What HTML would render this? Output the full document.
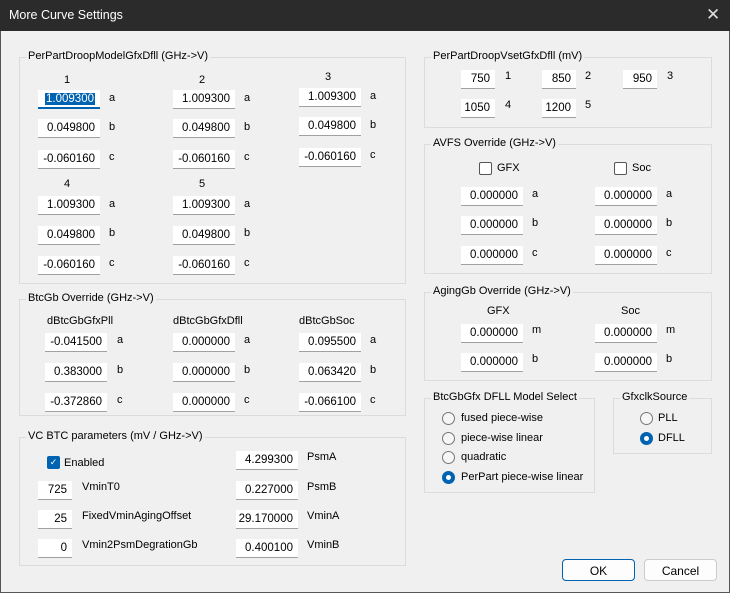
<!DOCTYPE html>
<html><head><style>
*{box-sizing:border-box;margin:0;padding:0}
body{width:730px;height:593px;background:#f0f0f0;font-family:"Liberation Sans",sans-serif;font-size:11px;color:#000;position:relative;overflow:hidden}
#tb{position:absolute;left:0;top:0;width:730px;height:31px;background:#2b2b2b;color:#fff;font-size:12.5px}
#tb .t{position:absolute;left:9px;top:8px}
#tb .x{position:absolute;left:706px;top:5px;font-size:17px;color:#ddd}
#frame{position:absolute;left:0;top:31px;width:730px;height:562px;border:1px solid #555;border-top:none}
.g{position:absolute;border:1px solid #dcdcdc}
.gt{position:absolute;background:#f0f0f0;padding:0 2px;white-space:nowrap;top:-8px;left:6px}
.i{position:absolute;background:#fff;border-bottom:1px solid #a0a0a0;height:19px;text-align:right;padding:3px 5px 0 0;font-size:11.5px}
.l{position:absolute;white-space:nowrap}
.sel{background:#0063b1;color:#fff;padding:0 1px}
.r{position:absolute;width:13px;height:13px;border:1px solid #777;border-radius:50%;background:#f6f6f6}
.r.on{background:#0063b1;border-color:#0063b1}
.r.on:after{content:"";position:absolute;left:3px;top:3px;width:5px;height:5px;border-radius:50%;background:#fff}
.cb{position:absolute;width:13px;height:13px;border:1px solid #555;background:#fff;border-radius:2px}
.btn{position:absolute;height:22px;width:73px;background:#fdfdfd;border:1px solid #ccc;border-radius:4px;text-align:center;padding-top:4px;font-size:12px}
</style></head><body>
<div id="tb"><span class="t">More Curve Settings</span><span class="x">✕</span></div>
<div id="frame"></div>

<div class="g" style="left:19px;top:57px;width:387px;height:227px"><span class="gt">PerPartDroopModelGfxDfll (GHz-&gt;V)</span></div>
<span class="l" style="left:64px;top:74px">1</span>
<span class="l" style="left:199px;top:74px">2</span>
<span class="l" style="left:325px;top:71px">3</span>
<div class="i" style="left:38px;top:90px;width:62px;border-bottom:2px solid #0063b1"><span class="sel">1.009300</span></div>
<div class="i" style="left:38px;top:119px;width:62px">0.049800</div>
<div class="i" style="left:38px;top:150px;width:62px">-0.060160</div>
<span class="l" style="left:109px;top:92px">a</span><span class="l" style="left:109px;top:121px">b</span><span class="l" style="left:109px;top:151px">c</span>
<div class="i" style="left:173px;top:90px;width:62px">1.009300</div>
<div class="i" style="left:173px;top:119px;width:62px">0.049800</div>
<div class="i" style="left:173px;top:150px;width:62px">-0.060160</div>
<span class="l" style="left:244px;top:92px">a</span><span class="l" style="left:244px;top:121px">b</span><span class="l" style="left:244px;top:151px">c</span>
<div class="i" style="left:299px;top:88px;width:62px">1.009300</div>
<div class="i" style="left:299px;top:117px;width:62px">0.049800</div>
<div class="i" style="left:299px;top:148px;width:62px">-0.060160</div>
<span class="l" style="left:370px;top:90px">a</span><span class="l" style="left:370px;top:119px">b</span><span class="l" style="left:370px;top:149px">c</span>
<span class="l" style="left:64px;top:178px">4</span>
<span class="l" style="left:199px;top:178px">5</span>
<div class="i" style="left:38px;top:196px;width:62px">1.009300</div>
<div class="i" style="left:38px;top:226px;width:62px">0.049800</div>
<div class="i" style="left:38px;top:256px;width:62px">-0.060160</div>
<span class="l" style="left:109px;top:198px">a</span><span class="l" style="left:109px;top:227px">b</span><span class="l" style="left:109px;top:257px">c</span>
<div class="i" style="left:173px;top:196px;width:62px">1.009300</div>
<div class="i" style="left:173px;top:226px;width:62px">0.049800</div>
<div class="i" style="left:173px;top:256px;width:62px">-0.060160</div>
<span class="l" style="left:244px;top:198px">a</span><span class="l" style="left:244px;top:227px">b</span><span class="l" style="left:244px;top:257px">c</span>

<div class="g" style="left:19px;top:299px;width:387px;height:117px"><span class="gt">BtcGb Override (GHz-&gt;V)</span></div>
<span class="l" style="left:47px;top:315px">dBtcGbGfxPll</span>
<span class="l" style="left:173px;top:315px">dBtcGbGfxDfll</span>
<span class="l" style="left:299px;top:315px">dBtcGbSoc</span>
<div class="i" style="left:45px;top:333px;width:62px">-0.041500</div>
<div class="i" style="left:45px;top:363px;width:62px">0.383000</div>
<div class="i" style="left:45px;top:393px;width:62px">-0.372860</div>
<span class="l" style="left:117px;top:334px">a</span><span class="l" style="left:117px;top:364px">b</span><span class="l" style="left:117px;top:394px">c</span>
<div class="i" style="left:173px;top:333px;width:62px">0.000000</div>
<div class="i" style="left:173px;top:363px;width:62px">0.000000</div>
<div class="i" style="left:173px;top:393px;width:62px">0.000000</div>
<span class="l" style="left:244px;top:334px">a</span><span class="l" style="left:244px;top:364px">b</span><span class="l" style="left:244px;top:394px">c</span>
<div class="i" style="left:299px;top:333px;width:62px">0.095500</div>
<div class="i" style="left:299px;top:363px;width:62px">0.063420</div>
<div class="i" style="left:299px;top:393px;width:62px">-0.066100</div>
<span class="l" style="left:370px;top:334px">a</span><span class="l" style="left:370px;top:364px">b</span><span class="l" style="left:370px;top:394px">c</span>

<div class="g" style="left:19px;top:437px;width:387px;height:129px"><span class="gt">VC BTC parameters (mV / GHz-&gt;V)</span></div>
<div class="cb" style="left:47px;top:456px;background:#0063b1;border-color:#0063b1;color:#fff;font-size:9px;text-align:center;line-height:11px">✓</div>
<span class="l" style="left:64px;top:457px">Enabled</span>
<div class="i" style="left:38px;top:481px;width:34px">725</div>
<div class="i" style="left:38px;top:510px;width:34px">25</div>
<div class="i" style="left:38px;top:539px;width:34px">0</div>
<span class="l" style="left:82px;top:481px">VminT0</span>
<span class="l" style="left:82px;top:510px">FixedVminAgingOffset</span>
<span class="l" style="left:82px;top:539px">Vmin2PsmDegrationGb</span>
<div class="i" style="left:236px;top:451px;width:62px">4.299300</div>
<div class="i" style="left:236px;top:481px;width:62px">0.227000</div>
<div class="i" style="left:236px;top:510px;width:62px">29.170000</div>
<div class="i" style="left:236px;top:539px;width:62px">0.400100</div>
<span class="l" style="left:307px;top:451px">PsmA</span>
<span class="l" style="left:307px;top:481px">PsmB</span>
<span class="l" style="left:307px;top:510px">VminA</span>
<span class="l" style="left:307px;top:539px">VminB</span>

<div class="g" style="left:424px;top:57px;width:288px;height:71px"><span class="gt">PerPartDroopVsetGfxDfll (mV)</span></div>
<div class="i" style="left:461px;top:70px;width:34px">750</div><span class="l" style="left:505px;top:70px">1</span>
<div class="i" style="left:542px;top:70px;width:34px">850</div><span class="l" style="left:585px;top:70px">2</span>
<div class="i" style="left:623px;top:70px;width:34px">950</div><span class="l" style="left:667px;top:70px">3</span>
<div class="i" style="left:461px;top:99px;width:34px">1050</div><span class="l" style="left:505px;top:99px">4</span>
<div class="i" style="left:542px;top:99px;width:34px">1200</div><span class="l" style="left:585px;top:99px">5</span>

<div class="g" style="left:424px;top:144px;width:288px;height:130px"><span class="gt">AVFS Override (GHz-&gt;V)</span></div>
<div class="cb" style="left:479px;top:162px"></div><span class="l" style="left:497px;top:162px">GFX</span>
<div class="cb" style="left:614px;top:162px"></div><span class="l" style="left:632px;top:162px">Soc</span>
<div class="i" style="left:461px;top:187px;width:62px">0.000000</div>
<div class="i" style="left:461px;top:216px;width:62px">0.000000</div>
<div class="i" style="left:461px;top:246px;width:62px">0.000000</div>
<span class="l" style="left:532px;top:188px">a</span><span class="l" style="left:532px;top:217px">b</span><span class="l" style="left:532px;top:247px">c</span>
<div class="i" style="left:595px;top:187px;width:62px">0.000000</div>
<div class="i" style="left:595px;top:216px;width:62px">0.000000</div>
<div class="i" style="left:595px;top:246px;width:62px">0.000000</div>
<span class="l" style="left:666px;top:188px">a</span><span class="l" style="left:666px;top:217px">b</span><span class="l" style="left:666px;top:247px">c</span>

<div class="g" style="left:424px;top:292px;width:288px;height:89px"><span class="gt">AgingGb Override (GHz-&gt;V)</span></div>
<span class="l" style="left:487px;top:305px">GFX</span><span class="l" style="left:621px;top:305px">Soc</span>
<div class="i" style="left:461px;top:324px;width:62px">0.000000</div>
<div class="i" style="left:461px;top:353px;width:62px">0.000000</div>
<span class="l" style="left:532px;top:324px">m</span><span class="l" style="left:532px;top:353px">b</span>
<div class="i" style="left:595px;top:324px;width:62px">0.000000</div>
<div class="i" style="left:595px;top:353px;width:62px">0.000000</div>
<span class="l" style="left:666px;top:324px">m</span><span class="l" style="left:666px;top:353px">b</span>

<div class="g" style="left:424px;top:398px;width:171px;height:95px"><span class="gt">BtcGbGfx DFLL Model Select</span></div>
<div class="r" style="left:442px;top:412px"></div><span class="l" style="left:461px;top:412px">fused piece-wise</span>
<div class="r" style="left:442px;top:432px"></div><span class="l" style="left:461px;top:432px">piece-wise linear</span>
<div class="r" style="left:442px;top:451px"></div><span class="l" style="left:461px;top:451px">quadratic</span>
<div class="r on" style="left:442px;top:471px"></div><span class="l" style="left:461px;top:471px">PerPart piece-wise linear</span>

<div class="g" style="left:613px;top:398px;width:99px;height:56px"><span class="gt">GfxclkSource</span></div>
<div class="r" style="left:640px;top:412px"></div><span class="l" style="left:658px;top:412px">PLL</span>
<div class="r on" style="left:640px;top:432px"></div><span class="l" style="left:658px;top:432px">DFLL</span>

<div class="btn" style="left:562px;top:559px;border:1px solid #0063b1">OK</div>
<div class="btn" style="left:644px;top:559px">Cancel</div>
</body></html>
